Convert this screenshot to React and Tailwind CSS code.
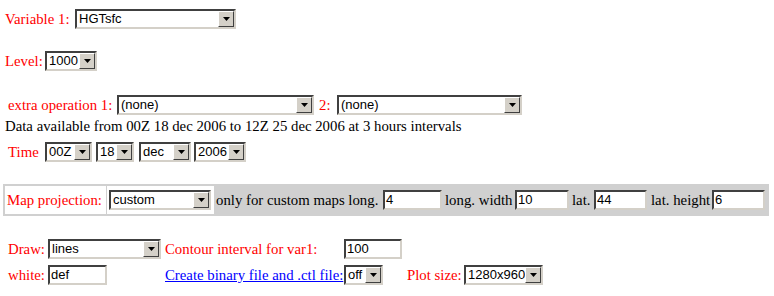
import React from "react";

function Sel({ w, children }) {
  return (
    <div
      className={`flex h-[20px] shrink-0 border-2 border-t-[#404040] border-l-[#404040] border-r-[#d4d0c8] border-b-[#d4d0c8] bg-white ${w}`}
    >
      <div className="flex-1 pl-[2px] text-[13px] leading-[16px] text-black overflow-hidden whitespace-nowrap" style={{ fontFamily: '"Liberation Sans", Arial, sans-serif' }}>
        {children}
      </div>
      <div className="flex h-full w-[16px] shrink-0 items-center justify-center border border-t-white border-l-white border-r-[#404040] border-b-[#404040] bg-[#d4d0c8]">
        <svg width="7" height="4" viewBox="0 0 7 4">
          <polygon points="0,0 7,0 3.5,4" fill="#000" />
        </svg>
      </div>
    </div>
  );
}

function Inp({ w, children }) {
  return (
    <div
      className={`flex h-[20px] shrink-0 items-center border-2 border-t-[#404040] border-l-[#404040] border-r-[#d4d0c8] border-b-[#d4d0c8] bg-white pl-[1px] text-[13px] leading-[16px] text-black whitespace-nowrap ${w}`}
      style={{ fontFamily: '"Liberation Sans", Arial, sans-serif' }}
    >
      {children}
    </div>
  );
}

export default function App() {
  return (
    <div
      className="w-[774px] h-[296px] bg-white text-[14.8px] text-black whitespace-nowrap"
      style={{ fontFamily: '"Liberation Serif", "Times New Roman", serif' }}
    >
      <div className="flex flex-col pt-[9px]">
        <div className="flex h-[20px] items-center">
          <span className="w-[75px] shrink-0 pl-[5px] text-[#ff0000]">Variable 1:</span>
          <Sel w="w-[161px]">HGTsfc</Sel>
        </div>

        <div className="mt-[22px] flex h-[20px] items-center">
          <span className="w-[45px] shrink-0 pl-[5px] text-[#ff0000]">Level:</span>
          <Sel w="w-[52px]">1000</Sel>
        </div>

        <div className="mt-[24px] flex h-[20px] items-center">
          <span className="w-[117px] shrink-0 pl-[8px] text-[#ff0000]">extra operation 1:</span>
          <Sel w="w-[197px]">(none)</Sel>
          <span className="w-[23px] shrink-0 pl-[5px] text-[#ff0000]">2:</span>
          <Sel w="w-[185px]">(none)</Sel>
        </div>

        <div className="mt-[1px] flex h-[20px] items-center pl-[5px]">
          Data available from 00Z 18 dec 2006 to 12Z 25 dec 2006 at 3 hours intervals
        </div>

        <div className="mt-[6px] flex h-[20px] items-center">
          <span className="w-[45px] shrink-0 pl-[8px] text-[#ff0000]">Time</span>
          <Sel w="w-[47px]">00Z</Sel>
          <div className="ml-[4px]"><Sel w="w-[38px]">18</Sel></div>
          <div className="ml-[5px]"><Sel w="w-[52px]">dec</Sel></div>
          <div className="ml-[3px]"><Sel w="w-[52px]">2006</Sel></div>
        </div>

        <div className="mt-[22px] ml-[3px] flex h-[32px] w-[766px] items-stretch bg-[#d0d0d0] p-[2px]">
          <div className="flex w-[101px] shrink-0 items-center bg-white pl-[2px] text-[#ff0000]">Map projection:</div>
          <div className="ml-[1px] flex w-[107px] shrink-0 items-center bg-white pl-[2px]"><Sel w="w-[102px]">custom</Sel></div>
          <div className="ml-[2px] flex items-center">
            <span className="w-[167px] shrink-0">only for custom maps long.</span>
            <Inp w="w-[59px]">4</Inp>
            <span className="w-[73px] shrink-0 pl-[3px]">long. width</span>
            <Inp w="w-[54px]">10</Inp>
            <span className="w-[25px] shrink-0 pl-[3px]">lat.</span>
            <Inp w="w-[53px]">44</Inp>
            <span className="w-[65px] shrink-0 pl-[4px]">lat. height</span>
            <Inp w="w-[53px]">6</Inp>
          </div>
        </div>

        <div className="mt-[23px] flex h-[20px] items-center">
          <span className="w-[48px] shrink-0 pl-[8px] text-[#ff0000]">Draw:</span>
          <Sel w="w-[113px]">lines</Sel>
          <span className="w-[183px] shrink-0 pl-[4px] text-[#ff0000]">Contour interval for var1:</span>
          <Inp w="w-[58px]">100</Inp>
        </div>

        <div className="mt-[6px] flex h-[20px] items-center">
          <span className="w-[48px] shrink-0 pl-[8px] text-[#ff0000]">white:</span>
          <Inp w="w-[59px]">def</Inp>
          <span className="w-[237px] shrink-0 pl-[58px]">
            <a href="#" className="text-[#0000ff] underline">Create binary file and .ctl file:</a>
          </span>
          <Sel w="w-[39px]">off</Sel>
          <span className="w-[81px] shrink-0 pl-[24px] text-[#ff0000]">Plot size:</span>
          <Sel w="w-[79px]">1280x960</Sel>
        </div>
      </div>
    </div>
  );
}
